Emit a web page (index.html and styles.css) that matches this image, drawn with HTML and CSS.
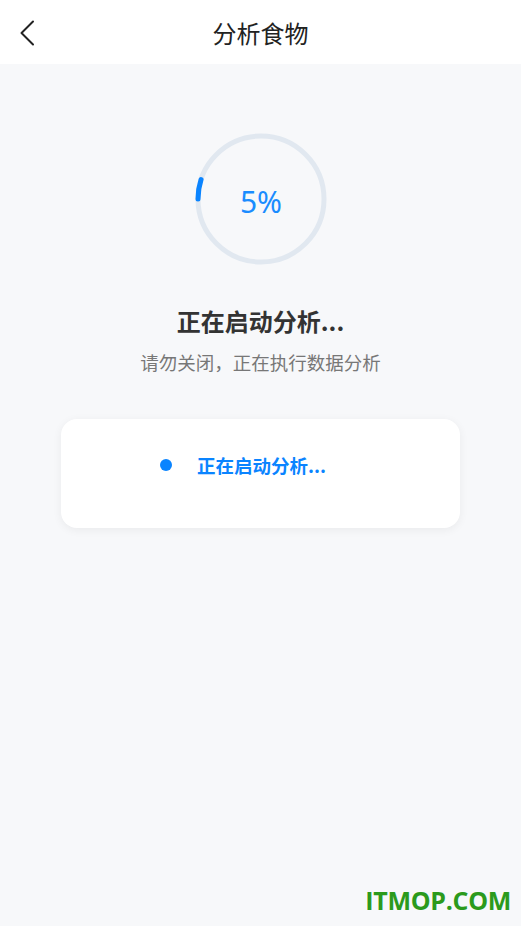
FILE: index.html
```html
<!DOCTYPE html>
<html lang="zh-CN">

<head>
    <meta charset="UTF-8">
    <meta name="viewport" content="width=device-width, initial-scale=1.0">
    <link rel="stylesheet" href="styles.css">
    <title>分析食物</title>
</head>

<body>
    <header class="topbar">
        <button class="back" aria-label="返回">
            <svg width="16" height="26" viewBox="0 0 16 26">
                <path d="M14 1.5 L2.5 13 L14 24.5" fill="none" stroke="#222" stroke-width="2" stroke-linecap="round"
                    stroke-linejoin="round" />
            </svg>
        </button>
        <h1>分析食物</h1>
    </header>

    <main class="page">
        <div class="ring">
            <svg width="132" height="132" viewBox="0 0 132 132">
                <circle cx="66" cy="66" r="63" fill="none" stroke="#e1e8f0" stroke-width="5" />
                <circle class="arc" cx="66" cy="66" r="63" fill="none" stroke="#0a84ff" stroke-width="5"
                    stroke-linecap="round" stroke-dasharray="19.8 400" transform="rotate(180 66 66)" />
            </svg>
            <span class="percent">5%</span>
        </div>

        <h2 class="status">正在启动分析...</h2>
        <p class="hint">请勿关闭，正在执行数据分析</p>

        <div class="card">
            <div class="step">
                <span class="dot"></span>
                <span>正在启动分析...</span>
            </div>
        </div>
    </main>

    <div class="watermark">ITMOP.COM</div>
</body>

</html>
```

FILE: styles.css
```css
:root {
    --font: "Noto Sans CJK SC", "Noto Sans", sans-serif;
    --background: #f7f8fa;
    --text: #222;
    --muted: #777;
    --accent: #0a84ff;
}

* {
    box-sizing: border-box;
}

html,
body {
    height: 100%;
}

body {
    margin: 0;
    background-color: var(--background);
    color: var(--text);
    font-family: var(--font);
    position: relative;
    overflow: hidden;
}

.topbar {
    height: 64px;
    background-color: #fff;
    display: flex;
    align-items: center;
    justify-content: center;
    position: relative;
}

.topbar h1 {
    margin: 0;
    font-size: 24px;
    font-weight: 400;
    color: #222;
}

.back {
    position: absolute;
    left: 19px;
    top: 20px;
    padding: 0;
    border: 0;
    background: none;
    display: flex;
}

.page {
    display: flex;
    flex-direction: column;
    align-items: center;
    padding-top: 69px;
}

.ring {
    width: 132px;
    height: 132px;
    position: relative;
    margin-left: 1px;
}

.ring svg {
    display: block;
}

.percent {
    position: absolute;
    inset: 0;
    display: flex;
    align-items: center;
    justify-content: center;
    padding-top: 4px;
    font-family: "Noto Sans", sans-serif;
    font-size: 30px;
    color: #1a8cff;
}

.status {
    margin: 39px 0 0;
    font-size: 24px;
    font-weight: 700;
    color: #333;
    line-height: 34px;
}

.hint {
    margin: 11px 0 0;
    font-size: 18.5px;
    color: var(--muted);
    line-height: 26px;
}

.card {
    margin-top: 44px;
    width: 399px;
    height: 109px;
    background-color: #fff;
    border-radius: 16px;
    box-shadow: 0 2px 10px rgba(0, 0, 0, 0.06);
    padding: 34px 0 0 99px;
}

.step {
    display: flex;
    align-items: center;
    gap: 25px;
    height: 24px;
    font-size: 18.5px;
    font-weight: 700;
    color: var(--accent);
}

.dot {
    width: 12px;
    height: 12px;
    border-radius: 50%;
    background-color: var(--accent);
}

.watermark {
    position: absolute;
    right: 10px;
    bottom: 9px;
    font-family: "Open Sans", sans-serif;
    font-weight: 700;
    font-size: 25px;
    color: #2b9a1c;
    letter-spacing: -0.3px;
}
```
